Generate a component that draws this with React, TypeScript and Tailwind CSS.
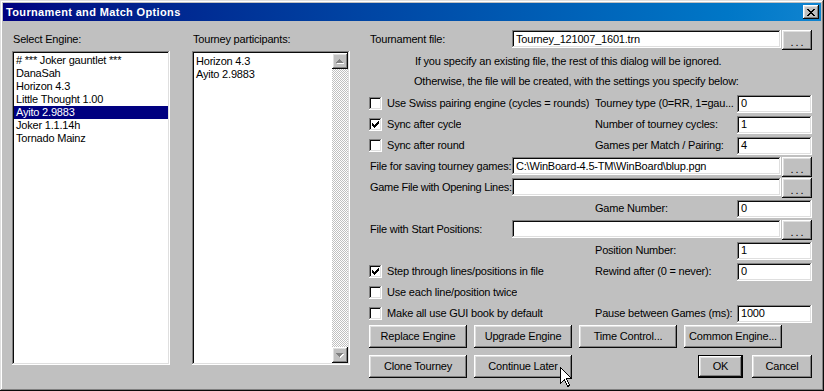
import React from "react";

const sunken =
  "bg-white shadow-[inset_-1px_-1px_#ffffff,inset_1px_1px_#808080,inset_-2px_-2px_#dfdfdf,inset_2px_2px_#0a0a0a]";
const raised =
  "bg-[#c0c0c0] shadow-[inset_-1px_-1px_#0a0a0a,inset_1px_1px_#ffffff,inset_-2px_-2px_#808080,inset_2px_2px_#dfdfdf]";

function Check({ checked }: { checked?: boolean }) {
  return (
    <div className={`w-[13px] h-[13px] shrink-0 relative ${sunken}`}>
      {checked && (
        <svg
          className="absolute left-[3px] top-[3px]"
          width="7"
          height="7"
          viewBox="0 0 7 7"
          shapeRendering="crispEdges"
        >
          <path
            fill="#000"
            d="M0 2h1v3H0z M1 3h1v3H1z M2 4h1v3H2z M3 3h1v3H3z M4 2h1v3H4z M5 1h1v3H5z M6 0h1v3H6z"
          />
        </svg>
      )}
    </div>
  );
}

function Field({ value, className }: { value?: string; className: string }) {
  return (
    <div
      className={`${sunken} h-[18px] pl-[4px] pr-[2px] flex items-center whitespace-nowrap overflow-hidden shrink-0 ${className}`}
    >
      {value}
    </div>
  );
}

function Dots() {
  return (
    <div
      className={`${raised} w-[30px] h-[20px] ml-[1px] shrink-0 flex items-end justify-center pb-[4px]`}
    >
      <span className="tracking-[2px] leading-[8px] pl-[2px]">...</span>
    </div>
  );
}

function Btn({ label, className, children }: { label: string; className: string; children?: React.ReactNode }) {
  return (
    <div
      className={`${raised} h-[23px] flex items-center justify-center shrink-0 relative ${className}`}
    >
      {label}
      {children}
    </div>
  );
}

function ArrowGlyph({ down }: { down?: boolean }) {
  const up = "M3 0h1v1H3z M2 1h3v1H2z M1 2h5v1H1z M0 3h7v1H0z";
  const dn = "M0 0h7v1H0z M1 1h5v1H1z M2 2h3v1H2z M3 3h1v1H3z";
  const d = down ? dn : up;
  return (
    <svg width="8" height="5" viewBox="0 0 8 5" shapeRendering="crispEdges">
      <path fill="#ffffff" d={d} transform="translate(1,1)" />
      <path fill="#808080" d={d} />
    </svg>
  );
}

function ScrollBtn({ down }: { down?: boolean }) {
  return (
    <div className={`${raised} w-[16px] h-[16px] flex items-center justify-center shrink-0`}>
      <ArrowGlyph down={down} />
    </div>
  );
}

const engines = [
  "# *** Joker gauntlet ***",
  "DanaSah",
  "Horizon 4.3",
  "Little Thought 1.00",
  "Ayito 2.9883",
  "Joker 1.1.14h",
  "Tornado Mainz",
];

function LabelRow({
  left,
  label,
  value,
}: {
  left?: React.ReactNode;
  label?: string;
  value?: string;
}) {
  return (
    <div className="flex items-center h-[21px]">
      <div className="w-[226px] shrink-0 flex items-center overflow-hidden">{left}</div>
      <div className="w-[142px] shrink-0 whitespace-nowrap overflow-hidden">{label}</div>
      {value !== undefined && <Field value={value} className="w-[75px]" />}
    </div>
  );
}

function CheckLabel({ text, checked }: { text: string; checked?: boolean }) {
  return (
    <div className="flex items-center w-[222px]">
      <Check checked={checked} />
      <span className="ml-[5px] whitespace-nowrap overflow-hidden">{text}</span>
    </div>
  );
}

function FileRow({ label, value, tight }: { label: string; value?: string; tight?: boolean }) {
  return (
    <div className="flex items-start h-[21px] pt-[1px]">
      <div
        className={`w-[143px] shrink-0 h-[18px] flex items-center whitespace-nowrap overflow-hidden pl-[1px] ${
          tight ? "tracking-[-0.3px]" : ""
        }`}
      >
        {label}
      </div>
      <Field value={value} className="w-[269px]" />
      <Dots />
    </div>
  );
}

export default function App() {
  return (
    <div
      className="w-[824px] h-[391px] p-[3px] bg-[#c0c0c0] shadow-[inset_-1px_-1px_#0a0a0a,inset_1px_1px_#dfdfdf,inset_-2px_-2px_#808080,inset_2px_2px_#ffffff] flex flex-col text-black text-[11px] leading-[13px] tracking-[-0.2px] font-['Liberation_Sans',Arial,sans-serif] select-none"
    >
      {/* Title bar */}
      <div className="h-[18px] shrink-0 bg-linear-to-r from-[#000080] to-[#1084d0] flex items-center justify-between pl-[3px] pr-[2px]">
        <span className="text-white font-bold text-[11px] tracking-[0.35px]">
          Tournament and Match Options
        </span>
        <div className={`${raised} w-[16px] h-[14px] flex items-center justify-center`}>
          <svg width="8" height="7" viewBox="0 0 8 7" shapeRendering="crispEdges">
            <path
              fill="#000"
              d="M0 0h2v1H0z M6 0h2v1H6z M1 1h2v1H1z M5 1h2v1H5z M2 2h4v1H2z M3 3h2v1H3z M2 4h4v1H2z M1 5h2v1H1z M5 5h2v1H5z M0 6h2v1H0z M6 6h2v1H6z"
            />
          </svg>
        </div>
      </div>

      {/* Body */}
      <div className="flex pl-[9px]">
        {/* Select engine */}
        <div className="w-[158px] shrink-0 flex flex-col">
          <div className="mt-[12px] h-[13px] pl-[1px]">Select Engine:</div>
          <div className={`${sunken} mt-[5px] h-[314px] p-[2px] pt-[3px]`}>
            {engines.map((e, i) => (
              <div
                key={i}
                className={`h-[13px] pl-[2px] whitespace-nowrap ${
                  i === 4 ? "bg-[#000080] text-white" : ""
                }`}
              >
                {e}
              </div>
            ))}
          </div>
        </div>

        {/* Participants */}
        <div className="w-[158px] ml-[22px] shrink-0 flex flex-col">
          <div className="mt-[12px] h-[13px] pl-[1px]">Tourney participants:</div>
          <div className={`${sunken} mt-[5px] h-[314px] p-[2px] flex`}>
            <div className="flex-1 pt-[2px] pl-[2px]">
              <div className="h-[13px]">Horizon 4.3</div>
              <div className="h-[13px]">Ayito 2.9883</div>
            </div>
            <div className="w-[16px] flex flex-col">
              <ScrollBtn />
              <div className="flex-1 bg-[repeating-conic-gradient(#c0c0c0_0_25%,#ffffff_0_50%)] bg-[length:2px_2px]" />
              <ScrollBtn down />
            </div>
          </div>
        </div>

        {/* Right */}
        <div className="w-[443px] ml-[19px] shrink-0 flex flex-col">
          <div className="mt-[8px] flex items-start h-[21px] pt-[1px]">
            <div className="w-[143px] shrink-0 h-[18px] flex items-center pl-[1px]">Tournament file:</div>
            <Field value="Tourney_121007_1601.trn" className="w-[269px]" />
            <Dots />
          </div>
          <div className="mt-[1px] h-[20px] flex items-center pl-[46px] whitespace-nowrap">
            If you specify an existing file, the rest of this dialog will be ignored.
          </div>
          <div className="h-[20px] flex items-center pl-[45px] whitespace-nowrap">
            Otherwise, the file will be created, with the settings you specify below:
          </div>
          <div className="mt-[2px]" />
          <LabelRow
            left={<CheckLabel text="Use Swiss pairing engine (cycles = rounds)" />}
            label="Tourney type (0=RR, 1=gau..."
            value="0"
          />
          <LabelRow
            left={<CheckLabel text="Sync after cycle" checked />}
            label="Number of tourney cycles:"
            value="1"
          />
          <LabelRow
            left={<CheckLabel text="Sync after round" />}
            label="Games per Match / Pairing:"
            value="4"
          />
          <FileRow label="File for saving tourney games:" value="C:\WinBoard-4.5-TM\WinBoard\blup.pgn" />
          <FileRow label="Game File with Opening Lines:" tight />
          <LabelRow label="Game Number:" value="0" />
          <FileRow label="File with Start Positions:" />
          <LabelRow label="Position Number:" value="1" />
          <LabelRow
            left={<CheckLabel text="Step through lines/positions in file" checked />}
            label="Rewind after (0 = never):"
            value="0"
          />
          <LabelRow left={<CheckLabel text="Use each line/position twice" />} />
          <LabelRow
            left={<CheckLabel text="Make all use GUI book by default" />}
            label="Pause between Games (ms):"
            value="1000"
          />

          <div className="mt-[1px] flex gap-[7px]">
            <Btn label="Replace Engine" className="w-[98px]" />
            <Btn label="Upgrade Engine" className="w-[98px]" />
            <Btn label="Time Control..." className="w-[98px]" />
            <Btn label="Common Engine..." className="w-[98px]" />
          </div>
          <div className="mt-[7px] flex">
            <Btn label="Clone Tourney" className="w-[98px]" />
            <Btn label="Continue Later" className="w-[98px] ml-[7px]">
              <svg
                className="absolute left-[86px] top-[12px]"
                width="13"
                height="21"
                viewBox="0 0 13 21"
                shapeRendering="crispEdges"
              >
                <path
                  d="M0.5 0.5 L0.5 16.5 L4.5 12.5 L7.5 19.5 L9.5 18.5 L6.5 11.5 L11.5 11.5 Z"
                  fill="#ffffff"
                  stroke="#000000"
                  strokeWidth="1"
                />
              </svg>
            </Btn>
            <div className="flex-1" />
            <div className="w-[45px] h-[23px] border border-black shrink-0">
              <div className={`${raised} w-full h-full flex items-center justify-center`}>OK</div>
            </div>
            <Btn label="Cancel" className="w-[60px] ml-[9px]" />
          </div>
        </div>
      </div>
    </div>
  );
}
